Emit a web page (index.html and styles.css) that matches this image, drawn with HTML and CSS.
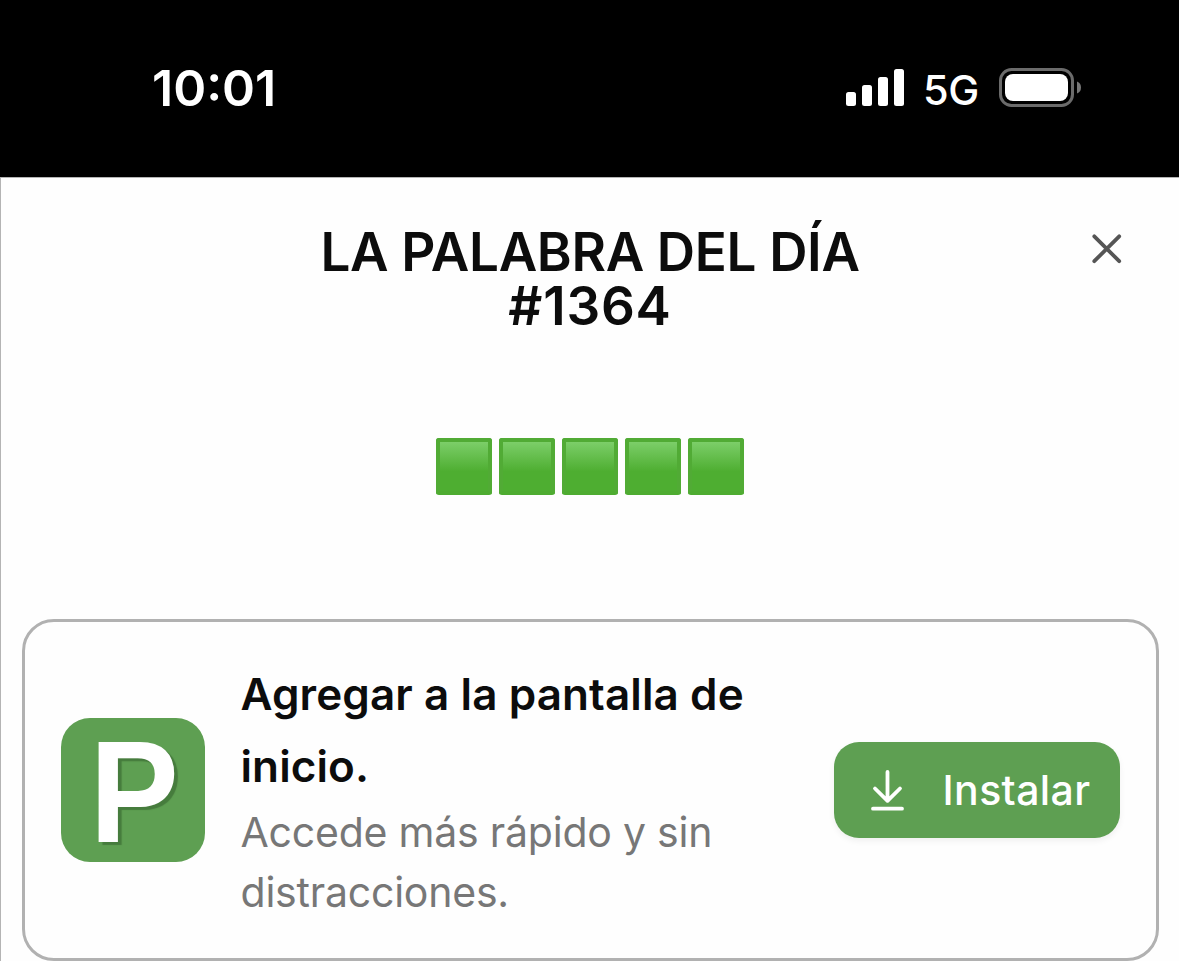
FILE: index.html
```
<!DOCTYPE html>
<html lang="es">
<head>
  <meta charset="UTF-8" />
  <title>La palabra del día</title>
  <link rel="stylesheet" href="styles.css">
</head>
<body>

  <header class="status-bar">
    <span class="time">10:01</span>
    <div class="status-right">
      <svg class="signal" width="58" height="37" viewBox="0 0 58 37" fill="#fff">
        <rect x="0" y="23" width="10" height="14" rx="2.5" />
        <rect x="16" y="16" width="10" height="21" rx="2.5" />
        <rect x="32" y="8" width="10" height="29" rx="2.5" />
        <rect x="48" y="0" width="10" height="37" rx="2.5" />
      </svg>
      <span class="network">5G</span>
      <svg class="battery" width="82" height="39" viewBox="0 0 82 39">
        <rect x="1.5" y="1.5" width="72" height="36" rx="11" fill="none" stroke="#6b6b6b" stroke-width="3" />
        <rect x="6" y="6" width="63" height="27" rx="8" fill="#fff" />
        <path d="M78 13.5 Q82 15 82 19.5 Q82 24 78 25.5 Z" fill="#777" />
      </svg>
    </div>
  </header>

  <main>
    <div class="title-row">
      <h1>
        <span class="name">LA PALABRA DEL DÍA</span>
        <span class="number">#1364</span>
      </h1>
      <button class="close" aria-label="Cerrar">
        <svg width="30" height="30" viewBox="0 0 30 30" stroke="#555" stroke-width="3.8" stroke-linecap="round">
          <path d="M2.3 2.3 L27.2 27.2 M27.2 2.3 L2.3 27.2" />
        </svg>
      </button>
    </div>

    <div class="tiles">
      <span class="tile"></span>
      <span class="tile"></span>
      <span class="tile"></span>
      <span class="tile"></span>
      <span class="tile"></span>
    </div>

    <section class="install">
      <div class="logo"><span class="logo-letter">P</span></div>
      <div class="install-text">
        <p class="install-title">Agregar a la pantalla de<br>inicio.</p>
        <p class="install-sub">Accede más rápido y sin<br>distracciones.</p>
      </div>
      <button class="install-btn">
        <svg width="33" height="41" viewBox="0 0 33 41" fill="none" stroke="#fff" stroke-width="3.8" stroke-linecap="round" stroke-linejoin="round">
          <path d="M16.5 2 V30 M4 18.5 L16.5 30.8 L29 18.5 M2 38.7 H31" />
        </svg>
        <span>Instalar</span>
      </button>
    </section>
  </main>

</body>
</html>
```
FILE: styles.css
```
* {
  box-sizing: border-box;
}

body {
  font-family: Inter, 'Liberation Sans', sans-serif;
  background: #fefefe;
  color: #0c0c0c;
  margin: 0;
  height: 961px;
  overflow: hidden;
}

button {
  font-family: inherit;
  border: none;
  background: none;
  padding: 0;
  cursor: pointer;
}

.status-bar {
  display: flex;
  justify-content: space-between;
  align-items: flex-start;
  height: 177px;
  padding: 68px 98px 0 152px;
  background: #000;
  color: #fff;
}

.time {
  font-size: 50px;
  font-weight: 600;
  line-height: 40px;
}

.status-right {
  display: flex;
  align-items: flex-start;
}

.signal {
  margin-top: 1px;
}

.network {
  width: 95px;
  padding-left: 19px;
  font-size: 41.5px;
  font-weight: 500;
  line-height: 44px;
  letter-spacing: -0.5px;
}

main {
  height: 784px;
  padding: 47px 20.5px 0 20.5px;
  border-left: 1px solid #b4b4b4;
  border-top: 1px solid #b4b4b4;
}

.title-row {
  display: grid;
  grid-template-columns: 100px 1fr 100px;
}

h1 {
  grid-column: 2;
  margin: 0;
  font-size: 53px;
  font-weight: 600;
  line-height: 54px;
  text-align: center;
}

h1 span {
  display: block;
}

.name {
  letter-spacing: -0.35px;
}

.number {
  letter-spacing: 0.8px;
}

.close {
  display: flex;
  align-self: start;
  justify-self: end;
  margin: 9px 37px 0 0;
}

.tiles {
  display: flex;
  justify-content: center;
  gap: 6.5px;
  margin-top: 105px;
}

.tile {
  width: 56.5px;
  height: 57px;
  border: 4px solid #51ab35;
  border-bottom-color: #4eac31;
  border-radius: 3px;
  background: linear-gradient(#7cce69, #4eae31 60%);
}

.install {
  display: flex;
  align-items: center;
  height: 342px;
  margin-top: 124px;
  padding: 0 36px;
  border: 3px solid #b1b1b1;
  border-radius: 32px;
}

.logo {
  display: flex;
  align-items: center;
  justify-content: center;
  width: 144px;
  height: 144px;
  padding: 4px 0 0 3px;
  border-radius: 29px;
  background: #5e9f52;
}

.logo-letter {
  color: #fff;
  font-family: 'Liberation Sans', sans-serif;
  font-size: 145px;
  font-weight: 700;
  line-height: 140px;
  transform: scaleX(0.92);
  text-shadow: 4px 3px 1px #467c3d;
}

.install-text {
  flex: 1;
  margin-left: 36px;
  white-space: nowrap;
}

.install-text p {
  margin: 0;
}

.install-title {
  font-size: 44px;
  font-weight: 600;
  line-height: 72px;
  letter-spacing: 0.1px;
}

.install-sub {
  color: #777;
  font-size: 41px;
  line-height: 60px;
  letter-spacing: -0.22px;
}

.install-btn {
  display: flex;
  align-items: center;
  gap: 39px;
  width: 286px;
  height: 96px;
  padding-left: 37px;
  border-radius: 25px;
  background: #5e9f52;
  color: #fff;
  font-size: 41px;
  font-weight: 450;
  letter-spacing: 0.4px;
  box-shadow: 0 3px 6px rgba(0, 0, 0, 0.06);
}
```
